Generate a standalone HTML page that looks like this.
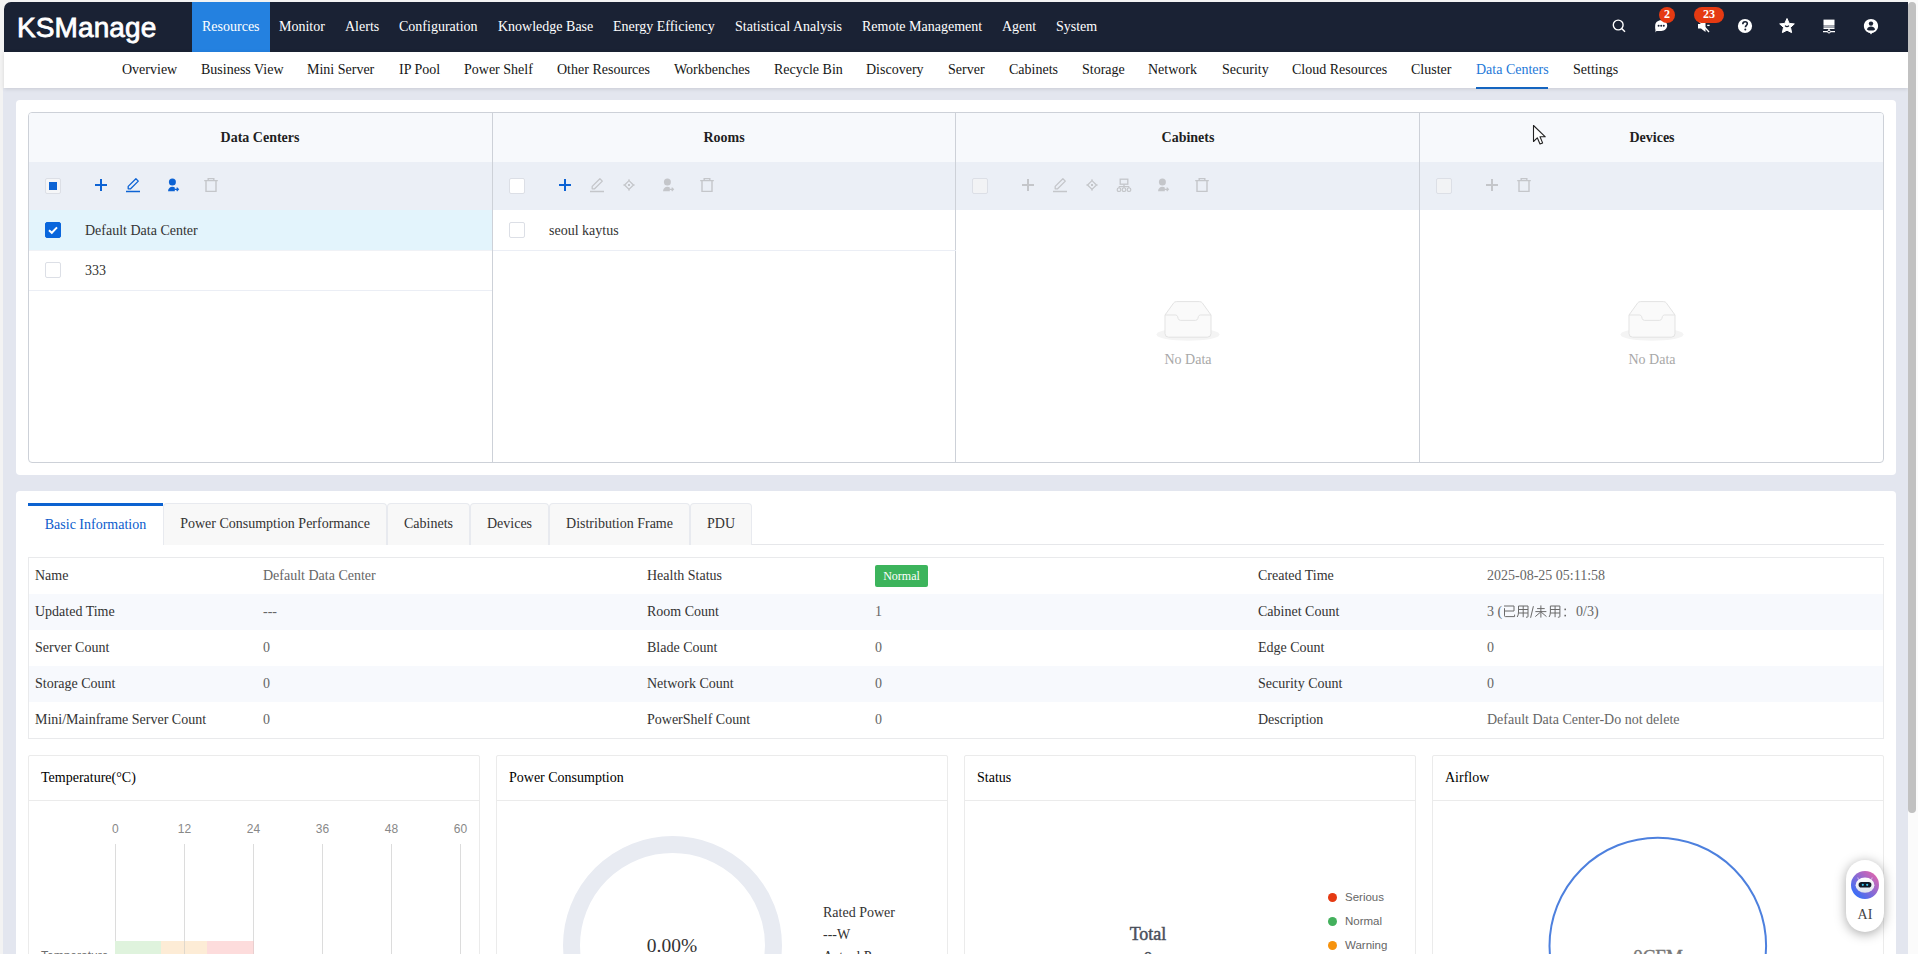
<!DOCTYPE html>
<html><head><meta charset="utf-8">
<style>
*{box-sizing:border-box;margin:0;padding:0}
html,body{width:1918px;height:954px;overflow:hidden;background:#f3f3f3;font-family:"Liberation Serif",serif;font-size:14px;color:#333}
.a{position:absolute}
#hdr{left:4px;top:2px;width:1904px;height:50px;background:#1a2234;border-top-left-radius:7px}
#logo{left:13px;top:10px;font-family:"Liberation Sans",sans-serif;font-size:28px;color:#fff;letter-spacing:0.1px;-webkit-text-stroke:0.8px #fff}
.mi{top:0;height:50px;line-height:50px;color:#fff;padding:0 10px;white-space:nowrap}
.mi.on{background:#2481e0}
#sub{left:4px;top:52px;width:1904px;height:36px;background:#fff;box-shadow:0 1px 4px rgba(0,0,0,.12)}
.si{top:0;height:36px;line-height:35px;color:#151515;white-space:nowrap}
.si.on{color:#1e78d8}
#content{left:3px;top:88px;width:1905px;height:866px;background:#e3e6ef}
#sbar{left:1908px;top:0;width:10px;height:954px;background:#fbfbfb}
#thumb{left:1908px;top:2px;width:8px;height:811px;background:#c1c1c1;border-radius:4px}
.panel{background:#fff;border-radius:4px}
.cb{width:16px;height:16px;border:1px solid #dcdfe6;border-radius:2px}
.ttl{height:49px;line-height:49px;text-align:center;font-weight:bold;color:#1f1f1f}
.rowt{height:40px;line-height:42px;color:#333;white-space:nowrap}

.tab{height:42px;line-height:40px;text-align:center;color:#333;background:#f8f8f8;border:1px solid #e8eaef;border-bottom:none;border-radius:4px 4px 0 0;white-space:nowrap}
.tab.on{background:#fff;color:#0b5ccc;border:none;border-top:3px solid #0c62d0;line-height:38px;border-radius:0}
.lab{height:36px;line-height:35px;color:#333;white-space:nowrap}
.val{height:36px;line-height:35px;color:#666;white-space:nowrap}
.badge{width:53px;height:22px;line-height:22px;background:#3cb45c;color:#fff;font-size:12px;text-align:center;border-radius:2px}
.card{border:1px solid #ebebeb;border-radius:2px;background:#fff;overflow:hidden}
.ctitle{height:45px;line-height:44px;color:#000;white-space:nowrap}
.axl{font-family:"Liberation Sans",sans-serif;font-size:12px;color:#888;text-align:center;line-height:15px;white-space:nowrap}
.pwl{font-size:14px;color:#333;line-height:20px;white-space:nowrap}
.lgd{font-family:"Liberation Sans",sans-serif;font-size:11.5px;color:#666;line-height:16px;white-space:nowrap}
.bdg{height:16px;line-height:15px;font-weight:bold;border-radius:50%;background:#e53a12;color:#fff;font-size:12px;text-align:center}
.nodata{text-align:center;color:#a8a8a8;line-height:16px}

</style></head>
<body>
<div id="content" class="a"></div>
<div id="hdr" class="a">
  <div id="logo" class="a">KSManage</div>
  <div class="a mi on" style="left:188px">Resources</div>
  <div class="a mi" style="left:265px">Monitor</div>
  <div class="a mi" style="left:331px">Alerts</div>
  <div class="a mi" style="left:385px">Configuration</div>
  <div class="a mi" style="left:484px">Knowledge Base</div>
  <div class="a mi" style="left:599px">Energy Efficiency</div>
  <div class="a mi" style="left:721px">Statistical Analysis</div>
  <div class="a mi" style="left:848px">Remote Management</div>
  <div class="a mi" style="left:988px">Agent</div>
  <div class="a mi" style="left:1042px">System</div>
</div>
<div id="sub" class="a">
  <div class="a si" style="left:118px">Overview</div>
  <div class="a si" style="left:197px">Business View</div>
  <div class="a si" style="left:303px">Mini Server</div>
  <div class="a si" style="left:395px">IP Pool</div>
  <div class="a si" style="left:460px">Power Shelf</div>
  <div class="a si" style="left:553px">Other Resources</div>
  <div class="a si" style="left:670px">Workbenches</div>
  <div class="a si" style="left:770px">Recycle Bin</div>
  <div class="a si" style="left:862px">Discovery</div>
  <div class="a si" style="left:944px">Server</div>
  <div class="a si" style="left:1005px">Cabinets</div>
  <div class="a si" style="left:1078px">Storage</div>
  <div class="a si" style="left:1144px">Network</div>
  <div class="a si" style="left:1218px">Security</div>
  <div class="a si" style="left:1288px">Cloud Resources</div>
  <div class="a si" style="left:1407px">Cluster</div>
  <div class="a si on" style="left:1472px">Data Centers</div>
  <div class="a" style="left:1472px;top:35px;width:72px;height:2px;background:#1565c0"></div>
  <div class="a si" style="left:1569px">Settings</div>
</div>
<!--PANEL1-->
<div class="a panel" style="left:16px;top:100px;width:1880px;height:375px"></div>
<div class="a" style="left:28px;top:112px;width:1856px;height:351px;border:1px solid #cdd1d8;border-radius:4px;overflow:hidden"><div class="a" style="left:-29px;top:-113px;width:1918px;height:500px">
<div class="a" style="left:29px;top:113px;width:463px;height:49px;background:#f7f9fc"></div>
<div class="a" style="left:29px;top:162px;width:463px;height:48px;background:#ebeff6"></div>
<div class="a ttl" style="left:28px;top:113px;width:464px">Data Centers</div>
<div class="a" style="left:492px;top:113px;width:463px;height:49px;background:#f7f9fc"></div>
<div class="a" style="left:492px;top:162px;width:463px;height:48px;background:#ebeff6"></div>
<div class="a ttl" style="left:492px;top:113px;width:464px">Rooms</div>
<div class="a" style="left:492px;top:113px;width:1px;height:349px;background:#cdd1d8"></div>
<div class="a" style="left:956px;top:113px;width:463px;height:49px;background:#f7f9fc"></div>
<div class="a" style="left:956px;top:162px;width:463px;height:48px;background:#ebeff6"></div>
<div class="a ttl" style="left:956px;top:113px;width:464px">Cabinets</div>
<div class="a" style="left:955px;top:113px;width:1px;height:349px;background:#cdd1d8"></div>
<div class="a" style="left:1420px;top:113px;width:463px;height:49px;background:#f7f9fc"></div>
<div class="a" style="left:1420px;top:162px;width:463px;height:48px;background:#ebeff6"></div>
<div class="a ttl" style="left:1420px;top:113px;width:464px">Devices</div>
<div class="a" style="left:1419px;top:113px;width:1px;height:349px;background:#cdd1d8"></div>
<div class="a cb" style="left:45px;top:178px;background:#f5f6f8"><div class="a" style="left:3px;top:3px;width:8px;height:8px;background:#0d63d4"></div></div>
<svg class="a" style="left:93px;top:177px" width="16" height="16"><path d="M8 2V14M2 8H14" stroke="#0d63d4" stroke-width="2" fill="none"/></svg><svg class="a" style="left:125px;top:177px" width="16" height="16"><path d="M3.2 11.8V9.4L10.9 1.7L13.3 4.1L5.6 11.8Z" stroke="#0d63d4" stroke-width="1.3" fill="none" stroke-linejoin="round"/><path d="M1 14.6H15" stroke="#0d63d4" stroke-width="1.5"/></svg><svg class="a" style="left:164.5px;top:176.7px" width="16" height="16"><circle cx="7.4" cy="5.0" r="3.5" fill="#0d63d4"/><path d="M3.0 14.2C3.2 11.5 5.0 9.8 7.3 9.8C8.3 9.8 9.1 10.1 9.8 10.6V14.2Z" fill="#0d63d4"/><path d="M9.3 12.3H13.4M11.7 10.6L13.4 12.3L11.7 14.0" stroke="#0d63d4" stroke-width="1.2" fill="none"/></svg><svg class="a" style="left:203px;top:177px" width="16" height="16"><path d="M1.2 3.6H14.8M5.2 3.4V1.6H10.8V3.4M3 3.8V14.4H13V3.8" stroke="#c4c6ca" stroke-width="1.4" fill="none"/></svg>
<div class="a" style="left:29px;top:210px;width:463px;height:40px;background:#e3f4fc"></div>
<div class="a" style="left:29px;top:290px;width:463px;height:1px;background:#ebeef5"></div>
<div class="a" style="left:29px;top:250px;width:463px;height:1px;background:#f0f2f6"></div>
<div class="a cb" style="left:45px;top:222px;background:#0a66dc;border-color:#0a66dc"><svg class="a" style="left:1px;top:2px" width="12" height="10"><path d="M2 5.2L4.8 7.8L10 2.4" stroke="#fff" stroke-width="2" fill="none"/></svg></div>
<div class="a rowt" style="left:85px;top:210px">Default Data Center</div>
<div class="a cb" style="left:45px;top:262px;background:#fff"></div>
<div class="a rowt" style="left:85px;top:250px">333</div>
<div class="a cb" style="left:509px;top:178px;background:#fff"></div>
<svg class="a" style="left:556.5px;top:177px" width="16" height="16"><path d="M8 2V14M2 8H14" stroke="#0d63d4" stroke-width="2" fill="none"/></svg><svg class="a" style="left:589px;top:177px" width="16" height="16"><path d="M3.2 11.8V9.4L10.9 1.7L13.3 4.1L5.6 11.8Z" stroke="#c4c6ca" stroke-width="1.3" fill="none" stroke-linejoin="round"/><path d="M1 14.6H15" stroke="#c4c6ca" stroke-width="1.5"/></svg><svg class="a" style="left:621px;top:177px" width="16" height="16"><path d="M8 3.6L3.6 8L8 12.4L12.4 8Z" stroke="#c4c6ca" stroke-width="1.3" fill="none" stroke-linejoin="round"/><path d="M8 2.2V3.8M8 12.2V13.8M2.2 8H3.8M12.2 8H13.8" stroke="#c4c6ca" stroke-width="1.2"/><rect x="7" y="7" width="2" height="2" fill="#c4c6ca"/></svg><svg class="a" style="left:660px;top:177px" width="16" height="16"><circle cx="7.4" cy="5.0" r="3.5" fill="#c4c6ca"/><path d="M3.0 14.2C3.2 11.5 5.0 9.8 7.3 9.8C8.3 9.8 9.1 10.1 9.8 10.6V14.2Z" fill="#c4c6ca"/><path d="M9.3 12.3H13.4M11.7 10.6L13.4 12.3L11.7 14.0" stroke="#c4c6ca" stroke-width="1.2" fill="none"/></svg><svg class="a" style="left:699px;top:177px" width="16" height="16"><path d="M1.2 3.6H14.8M5.2 3.4V1.6H10.8V3.4M3 3.8V14.4H13V3.8" stroke="#c4c6ca" stroke-width="1.4" fill="none"/></svg>
<div class="a" style="left:493px;top:250px;width:463px;height:1px;background:#ebeef5"></div>
<div class="a cb" style="left:509px;top:222px;background:#fff"></div>
<div class="a rowt" style="left:549px;top:210px">seoul kaytus</div>
<div class="a cb" style="left:972px;top:178px;background:#f2f3f5;border-color:#dcdfe6"></div>
<svg class="a" style="left:1020px;top:177px" width="16" height="16"><path d="M8 2V14M2 8H14" stroke="#c4c6ca" stroke-width="2" fill="none"/></svg><svg class="a" style="left:1052px;top:177px" width="16" height="16"><path d="M3.2 11.8V9.4L10.9 1.7L13.3 4.1L5.6 11.8Z" stroke="#c4c6ca" stroke-width="1.3" fill="none" stroke-linejoin="round"/><path d="M1 14.6H15" stroke="#c4c6ca" stroke-width="1.5"/></svg><svg class="a" style="left:1084px;top:177px" width="16" height="16"><path d="M8 3.6L3.6 8L8 12.4L12.4 8Z" stroke="#c4c6ca" stroke-width="1.3" fill="none" stroke-linejoin="round"/><path d="M8 2.2V3.8M8 12.2V13.8M2.2 8H3.8M12.2 8H13.8" stroke="#c4c6ca" stroke-width="1.2"/><rect x="7" y="7" width="2" height="2" fill="#c4c6ca"/></svg><svg class="a" style="left:1116px;top:177px" width="16" height="16"><rect x="4.2" y="2.2" width="7.6" height="5" stroke="#c4c6ca" stroke-width="1.3" fill="none"/><path d="M8 7.5V9.6M3 9.6H13" stroke="#c4c6ca" stroke-width="1.3" fill="none"/><path d="M3 9.6V11M8 9.6V11M13 9.6V11" stroke="#c4c6ca" stroke-width="1.1"/><rect x="1.3" y="11" width="3.4" height="3.4" rx="1.2" stroke="#c4c6ca" stroke-width="1.2" fill="none"/><rect x="6.3" y="11" width="3.4" height="3.4" rx="1.2" stroke="#c4c6ca" stroke-width="1.2" fill="none"/><rect x="11.3" y="11" width="3.4" height="3.4" rx="1.2" stroke="#c4c6ca" stroke-width="1.2" fill="none"/></svg><svg class="a" style="left:1155px;top:177px" width="16" height="16"><circle cx="7.4" cy="5.0" r="3.5" fill="#c4c6ca"/><path d="M3.0 14.2C3.2 11.5 5.0 9.8 7.3 9.8C8.3 9.8 9.1 10.1 9.8 10.6V14.2Z" fill="#c4c6ca"/><path d="M9.3 12.3H13.4M11.7 10.6L13.4 12.3L11.7 14.0" stroke="#c4c6ca" stroke-width="1.2" fill="none"/></svg><svg class="a" style="left:1194px;top:177px" width="16" height="16"><path d="M1.2 3.6H14.8M5.2 3.4V1.6H10.8V3.4M3 3.8V14.4H13V3.8" stroke="#c4c6ca" stroke-width="1.4" fill="none"/></svg>
<svg class="a" style="left:1156px;top:298px" width="64" height="46"><ellipse cx="32" cy="36.5" rx="31.5" ry="6.3" fill="#f4f4f4"/><path d="M9 17L17.5 5.2Q18.5 3.6 20.5 3.6H43.5Q45.5 3.6 46.5 5.2L55 17V35.5Q55 39.2 51.3 39.2H12.7Q9 39.2 9 35.5Z" fill="#fafafa" stroke="#e3e3e3" stroke-width="1"/><path d="M9 17H19.5Q21 17 21.6 18.6L22.2 20.6Q22.8 22.4 24.6 22.4H39.4Q41.2 22.4 41.8 20.6L42.4 18.6Q43 17 44.5 17H55" fill="none" stroke="#e3e3e3" stroke-width="1"/></svg><div class="a nodata" style="left:1148px;top:352px;width:80px">No Data</div>
<div class="a cb" style="left:1436px;top:178px;background:#f2f3f5;border-color:#dcdfe6"></div>
<svg class="a" style="left:1484px;top:177px" width="16" height="16"><path d="M8 2V14M2 8H14" stroke="#c4c6ca" stroke-width="2" fill="none"/></svg><svg class="a" style="left:1516px;top:177px" width="16" height="16"><path d="M1.2 3.6H14.8M5.2 3.4V1.6H10.8V3.4M3 3.8V14.4H13V3.8" stroke="#c4c6ca" stroke-width="1.4" fill="none"/></svg>
<svg class="a" style="left:1620px;top:298px" width="64" height="46"><ellipse cx="32" cy="36.5" rx="31.5" ry="6.3" fill="#f4f4f4"/><path d="M9 17L17.5 5.2Q18.5 3.6 20.5 3.6H43.5Q45.5 3.6 46.5 5.2L55 17V35.5Q55 39.2 51.3 39.2H12.7Q9 39.2 9 35.5Z" fill="#fafafa" stroke="#e3e3e3" stroke-width="1"/><path d="M9 17H19.5Q21 17 21.6 18.6L22.2 20.6Q22.8 22.4 24.6 22.4H39.4Q41.2 22.4 41.8 20.6L42.4 18.6Q43 17 44.5 17H55" fill="none" stroke="#e3e3e3" stroke-width="1"/></svg><div class="a nodata" style="left:1612px;top:352px;width:80px">No Data</div>
</div></div>
<!--/PANEL1-->
<!--PANEL2-->
<div class="a panel" style="left:16px;top:491px;width:1880px;height:470px"></div>
<div class="a" style="left:28px;top:544px;width:1856px;height:1px;background:#e6e7ea"></div>
<div class="a tab on" style="left:28px;top:503px;width:135px">Basic Information</div>
<div class="a tab" style="left:163px;top:503px;width:224px">Power Consumption Performance</div>
<div class="a tab" style="left:387px;top:503px;width:83px">Cabinets</div>
<div class="a tab" style="left:470px;top:503px;width:79px">Devices</div>
<div class="a tab" style="left:549px;top:503px;width:141px">Distribution Frame</div>
<div class="a tab" style="left:690px;top:503px;width:62px">PDU</div>
<div class="a" style="left:28px;top:557px;width:1856px;height:182px;border:1px solid #e9eaec"></div>
<div class="a" style="left:29px;top:594px;width:1854px;height:36px;background:#f7f9fd"></div>
<div class="a" style="left:29px;top:666px;width:1854px;height:36px;background:#f7f9fd"></div>
<div class="a lab" style="left:35px;top:558px">Name</div>
<div class="a val" style="left:263px;top:558px">Default Data Center</div>
<div class="a lab" style="left:647px;top:558px">Health Status</div>
<div class="a badge" style="left:875px;top:565px">Normal</div>
<div class="a lab" style="left:1258px;top:558px">Created Time</div>
<div class="a val" style="left:1487px;top:558px">2025-08-25 05:11:58</div>
<div class="a lab" style="left:35px;top:594px">Updated Time</div>
<div class="a val" style="left:263px;top:594px">---</div>
<div class="a lab" style="left:647px;top:594px">Room Count</div>
<div class="a val" style="left:875px;top:594px">1</div>
<div class="a lab" style="left:1258px;top:594px">Cabinet Count</div>
<div class="a val" style="left:1487px;top:594px">3 (<span style="display:inline-block;position:relative;width:73.9px;height:15px;vertical-align:top"><svg style="position:absolute;left:0;top:9.5px" width="74" height="15"><path d="M2 2H12M12 2V7M2.5 7H12M2.5 4.2V11.8Q2.5 12.6 3.4 12.6H12.6V10.6M16.5 2V8Q16.5 11.2 15.2 13M16.5 2H26M26 2V12.4Q26 13.2 25 13.2H24M16.5 5.5H26M16.5 9H26M21.2 2V13.2M31.4 2.2L28.6 13.8M35.09 4.6H42.69M33.39 7.6H44.39M38.89 1.4V13.6M38.69 8L33.29 12.6M39.09 8L44.49 12.6M48.39 2V8Q48.39 11.2 47.09 13M48.39 2H57.89M57.89 2V12.4Q57.89 13.2 56.89 13.2H55.89M48.39 5.5H57.89M48.39 9H57.89M53.09 2V13.2" stroke="#6a6a6a" stroke-width="1" fill="none"/><rect x="62.4" y="4.6" width="1.6" height="1.6" fill="#6a6a6a"/><rect x="62.4" y="10.8" width="1.6" height="1.6" fill="#6a6a6a"/></svg></span>0/3)</div>
<div class="a lab" style="left:35px;top:630px">Server Count</div>
<div class="a val" style="left:263px;top:630px">0</div>
<div class="a lab" style="left:647px;top:630px">Blade Count</div>
<div class="a val" style="left:875px;top:630px">0</div>
<div class="a lab" style="left:1258px;top:630px">Edge Count</div>
<div class="a val" style="left:1487px;top:630px">0</div>
<div class="a lab" style="left:35px;top:666px">Storage Count</div>
<div class="a val" style="left:263px;top:666px">0</div>
<div class="a lab" style="left:647px;top:666px">Network Count</div>
<div class="a val" style="left:875px;top:666px">0</div>
<div class="a lab" style="left:1258px;top:666px">Security Count</div>
<div class="a val" style="left:1487px;top:666px">0</div>
<div class="a lab" style="left:35px;top:702px">Mini/Mainframe Server Count</div>
<div class="a val" style="left:263px;top:702px">0</div>
<div class="a lab" style="left:647px;top:702px">PowerShelf Count</div>
<div class="a val" style="left:875px;top:702px">0</div>
<div class="a lab" style="left:1258px;top:702px">Description</div>
<div class="a val" style="left:1487px;top:702px">Default Data Center-Do not delete</div>
<div class="a card" style="left:28px;top:755px;width:452px;height:260px"><div class="a ctitle" style="left:12px;top:0">Temperature(°C)</div><div class="a" style="left:0;top:44px;width:100%;height:1px;background:#ebebeb"></div></div>
<div class="a card" style="left:496px;top:755px;width:452px;height:260px"><div class="a ctitle" style="left:12px;top:0">Power Consumption</div><div class="a" style="left:0;top:44px;width:100%;height:1px;background:#ebebeb"></div></div>
<div class="a card" style="left:964px;top:755px;width:452px;height:260px"><div class="a ctitle" style="left:12px;top:0">Status</div><div class="a" style="left:0;top:44px;width:100%;height:1px;background:#ebebeb"></div></div>
<div class="a card" style="left:1432px;top:755px;width:452px;height:260px"><div class="a ctitle" style="left:12px;top:0">Airflow</div><div class="a" style="left:0;top:44px;width:100%;height:1px;background:#ebebeb"></div></div>
<!--/PANEL2-->
<!--CHARTS-->
<div class="a axl" style="left:95.4px;top:822px;width:40px">0</div>
<div class="a" style="left:115px;top:844px;width:1px;height:110px;background:#dcdcdc"></div>
<div class="a axl" style="left:164.4px;top:822px;width:40px">12</div>
<div class="a" style="left:184px;top:844px;width:1px;height:110px;background:#dcdcdc"></div>
<div class="a axl" style="left:233.4px;top:822px;width:40px">24</div>
<div class="a" style="left:253px;top:844px;width:1px;height:110px;background:#dcdcdc"></div>
<div class="a axl" style="left:302.4px;top:822px;width:40px">36</div>
<div class="a" style="left:322px;top:844px;width:1px;height:110px;background:#dcdcdc"></div>
<div class="a axl" style="left:371.4px;top:822px;width:40px">48</div>
<div class="a" style="left:391px;top:844px;width:1px;height:110px;background:#dcdcdc"></div>
<div class="a axl" style="left:440.4px;top:822px;width:40px">60</div>
<div class="a" style="left:460px;top:844px;width:1px;height:110px;background:#dcdcdc"></div>
<div class="a" style="left:115px;top:941px;width:46px;height:14px;background:#dff3dd"></div>
<div class="a" style="left:161px;top:941px;width:46px;height:14px;background:#fdecd6"></div>
<div class="a" style="left:207px;top:941px;width:47px;height:14px;background:#fddcdc"></div>
<div class="a" style="left:184px;top:941px;width:1px;height:14px;background:#e0d8cc"></div>
<div class="a" style="left:253px;top:941px;width:1px;height:14px;background:#e8cfcf"></div>
<div class="a axl" style="left:41px;top:949px;text-align:left;color:#6e6e6e">Temperature</div>
<svg class="a" style="left:560px;top:833px" width="226" height="226"><circle cx="112.5" cy="112.5" r="101" fill="none" stroke="#e8ebf2" stroke-width="17"/></svg>
<div class="a" style="left:612px;top:933.5px;width:120px;text-align:center;font-size:19.5px;color:#333;line-height:24px">0.00%</div>
<div class="a pwl" style="left:823px;top:903px">Rated Power</div>
<div class="a pwl" style="left:823px;top:924.5px">---W</div>
<div class="a pwl" style="left:823px;top:946.5px">Actual Power</div>
<div class="a" style="left:1108px;top:922.5px;width:80px;text-align:center;font-size:18px;color:#4a4f5a;-webkit-text-stroke:0.45px #4a4f5a;line-height:22px">Total</div>
<div class="a" style="left:1108px;top:947.5px;width:80px;text-align:center;font-size:18px;color:#4a4f5a;-webkit-text-stroke:0.45px #4a4f5a;line-height:22px">0</div>
<div class="a" style="left:1327.8px;top:893.3px;width:9px;height:9px;border-radius:50%;background:#e53a12"></div>
<div class="a lgd" style="left:1345px;top:888.8px">Serious</div>
<div class="a" style="left:1327.8px;top:917.3px;width:9px;height:9px;border-radius:50%;background:#43b05c"></div>
<div class="a lgd" style="left:1345px;top:912.8px">Normal</div>
<div class="a" style="left:1327.8px;top:941.3px;width:9px;height:9px;border-radius:50%;background:#f6920d"></div>
<div class="a lgd" style="left:1345px;top:936.8px">Warning</div>
<svg class="a" style="left:1545px;top:833px" width="226" height="226"><circle cx="112.8" cy="113" r="108.3" fill="none" stroke="#4d80de" stroke-width="2"/></svg>
<div class="a" style="left:1598px;top:945px;width:120px;text-align:center;font-size:19px;color:#777;-webkit-text-stroke:0.4px #777;line-height:24px">0CFM</div>
<!--/CHARTS-->
<!--ICONS-->
<svg class="a" style="left:1610px;top:17px" width="18" height="18"><circle cx="8.2" cy="8" r="4.9" fill="none" stroke="#fff" stroke-width="1.4"/><path d="M11.6 11.5L15 14.7" stroke="#fff" stroke-width="1.5"/></svg>
<svg class="a" style="left:1652px;top:17px" width="18" height="18"><path d="M9.2 3.2C12.8 3.2 15.2 5.6 15.2 8.6C15.2 11.6 12.8 14 9.2 14H4.4L3.6 15.4L3.4 12.6C3.1 11.6 3.1 10 3.2 8.6C3.2 5.6 5.6 3.2 9.2 3.2Z" fill="#fff"/><circle cx="6.6" cy="8.8" r="1" fill="#1a2234"/><circle cx="9.2" cy="8.8" r="1" fill="#1a2234"/><circle cx="11.8" cy="8.8" r="1" fill="#1a2234"/></svg>
<div class="a bdg" style="left:1659px;top:7px;width:16px">2</div>
<svg class="a" style="left:1695px;top:17px" width="18" height="18"><path d="M3 7H6L10.5 3.5V15L6 11.5H3Z" fill="#fff"/><path d="M4 4L14 15" stroke="#fff" stroke-width="1.3"/><path d="M12.2 8.4H14.6" stroke="#fff" stroke-width="1.3"/></svg>
<div class="a bdg" style="left:1694px;top:7px;width:30px;border-radius:8px">23</div>
<svg class="a" style="left:1736px;top:17px" width="18" height="18"><circle cx="9" cy="9" r="7.1" fill="#fff"/><path d="M6.8 7.2C6.8 5.6 7.8 4.8 9.1 4.8C10.4 4.8 11.3 5.6 11.3 6.8C11.3 8.3 9.4 8.5 9.4 10.2" stroke="#1a2234" stroke-width="1.6" fill="none"/><circle cx="9.3" cy="12.6" r="1" fill="#1a2234"/></svg>
<svg class="a" style="left:1778px;top:17px" width="18" height="18"><path d="M9 1.5L11.2 6.4L16.3 6.9L12.5 10.4L13.6 15.6L9 13.2L4.4 15.6L5.5 10.4L1.7 6.9L6.8 6.4Z" fill="#fff" stroke="#fff" stroke-width="1" stroke-linejoin="round"/><path d="M7 8.6Q9 10.6 11 8.6" stroke="#1a2234" stroke-width="1.2" fill="none"/></svg>
<svg class="a" style="left:1820px;top:17px" width="18" height="18"><rect x="3.5" y="2.6" width="11" height="6" fill="#fff"/><rect x="3.5" y="9.2" width="11" height="1.4" fill="#cfd3da"/><rect x="3.5" y="10.8" width="11" height="1.2" fill="#fff"/><path d="M9 12V13.8M3 14.6H15" stroke="#fff" stroke-width="1.2"/><circle cx="9" cy="14.6" r="1.4" fill="#1a2234" stroke="#fff" stroke-width="1"/></svg>
<svg class="a" style="left:1862px;top:17px" width="18" height="18"><path d="M9 1.9C13.1 1.9 16.1 4.9 16.1 9C16.1 12.6 13.6 15.3 10.1 16L9 17.4L7.9 16C4.4 15.3 1.9 12.6 1.9 9C1.9 4.9 4.9 1.9 9 1.9Z" fill="#fff"/><circle cx="9" cy="6.6" r="2.2" fill="#1a2234"/><path d="M4.9 12.4C5.6 10.6 7 9.6 9 9.6C11 9.6 12.4 10.6 13.1 12.4C12.2 13.2 10.8 13.6 9 13.6C7.2 13.6 5.8 13.2 4.9 12.4Z" fill="#1a2234"/></svg>
<div class="a" style="left:1846px;top:860px;width:38px;height:72px;border-radius:19px;background:#fff;box-shadow:0 2px 12px rgba(0,0,0,.35)"></div>
<svg class="a" style="left:1851px;top:871px" width="28" height="28"><defs><linearGradient id="gai" x1="0.15" y1="0.85" x2="0.85" y2="0.15"><stop offset="0" stop-color="#3a6ef7"/><stop offset="1" stop-color="#d566b2"/></linearGradient><linearGradient id="ghd" x1="0" y1="0" x2="0" y2="1"><stop offset="0" stop-color="#ffffff"/><stop offset="1" stop-color="#dfe3ee"/></linearGradient></defs><circle cx="14" cy="14" r="14" fill="url(#gai)"/><ellipse cx="14" cy="14.2" rx="9.4" ry="7.6" fill="url(#ghd)"/><rect x="7.6" y="11" width="12.8" height="5.6" rx="2.8" fill="#0f1725"/><circle cx="11.8" cy="13.8" r="1.1" fill="#3ec8f0"/><circle cx="16.2" cy="13.8" r="1.1" fill="#3ec8f0"/><path d="M7.5 8.5L6.8 6.5M20.5 8.5L21.2 6.5" stroke="#e9d8f0" stroke-width="0.8"/></svg>
<div class="a" style="left:1846px;top:905px;width:38px;text-align:center;font-size:14px;line-height:20px;color:#444">AI</div>
<svg class="a" style="left:1532px;top:124px" width="16" height="22"><path d="M1.5 1.5V17.5L5.3 13.8L8 20L10.6 18.9L8 12.8H13.3Z" fill="#fff" stroke="#222" stroke-width="1.1" stroke-linejoin="round"/></svg>

<!--/ICONS-->
<div id="sbar" class="a"></div>
<div id="thumb" class="a"></div>
</body></html>
